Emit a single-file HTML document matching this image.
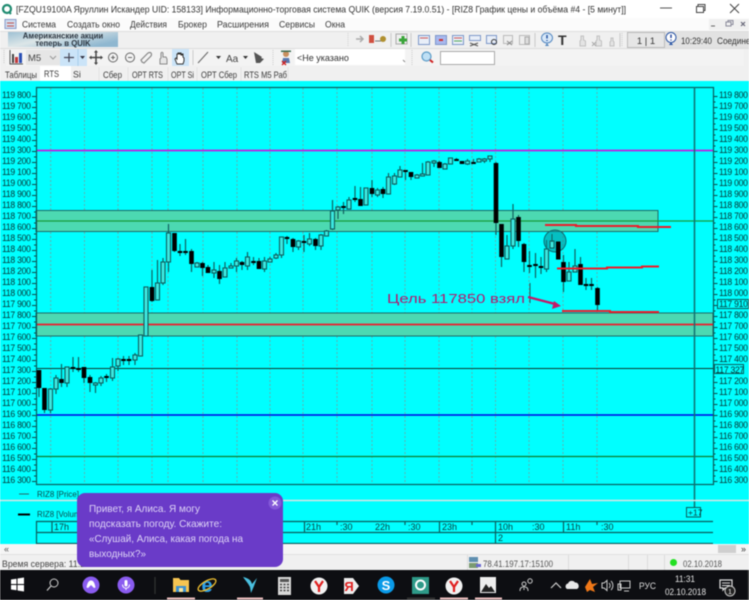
<!DOCTYPE html>
<html lang="ru"><head><meta charset="utf-8"><title>QUIK</title>
<style>
html,body{margin:0;padding:0;background:#fff;width:749px;height:600px;overflow:hidden}
#w{position:relative;width:749px;height:600px;overflow:hidden;filter:blur(.5px);font-family:"Liberation Sans","Noto Sans CJK SC",sans-serif}
svg{position:absolute;left:0;top:0}
.ax{position:absolute;font-size:9.6px;line-height:11px;letter-spacing:-.3px;color:#063232;white-space:nowrap;transform:scaleX(.9);transform-origin:0 0}
</style></head><body><div id="w">
<svg id="s" width="749" height="600" viewBox="0 0 749 600" font-family="Liberation Sans, sans-serif">
<rect width="749" height="600" fill="#f0f0f0"/>
<rect width="749" height="18" fill="#fff"/>
<rect y="18" width="749" height="13" fill="#fbfbfb"/>
<rect y="81" width="749" height="463" fill="#00ffff"/>
<circle cx="7" cy="9" r="4" fill="none" stroke="#1f8a70" stroke-width="2.2"/>
<path d="M9 12l2 2" stroke="#1f8a70" stroke-width="2"/>
<text x="16" y="12.5" font-size="9.6" fill="#333" textLength="610" lengthAdjust="spacingAndGlyphs">[FZQU19100A Яруллин Искандер UID: 158133] Информационно-торговая система QUIK (версия 7.19.0.51) - [RIZ8 График цены и объёма #4 - [5 минут]]</text>
<path d="M660 8h12" stroke="#555"/><rect x="696.500" y="6.500" width="7" height="6" fill="none" stroke="#444"/><path d="M698 6V4.500h7v6h-1.500" fill="none" stroke="#444"/><path d="M730 4l9 9M739 4l-9 9" stroke="#444"/>
<rect x="5" y="19.500" width="11" height="9" fill="#cfdcef" stroke="#8a9bc9"/><path d="M7 23h7M7 26h7" stroke="#c0504d"/>
<g font-size="8.8" fill="#3a3a3a">
<text x="22" y="27.500" textLength="34" lengthAdjust="spacingAndGlyphs">Система</text>
<text x="67" y="27.500" textLength="53" lengthAdjust="spacingAndGlyphs">Создать окно</text>
<text x="130" y="27.500" textLength="37" lengthAdjust="spacingAndGlyphs">Действия</text>
<text x="178" y="27.500" textLength="29" lengthAdjust="spacingAndGlyphs">Брокер</text>
<text x="217" y="27.500" textLength="52" lengthAdjust="spacingAndGlyphs">Расширения</text>
<text x="279" y="27.500" textLength="36" lengthAdjust="spacingAndGlyphs">Сервисы</text>
<text x="325" y="27.500" textLength="20" lengthAdjust="spacingAndGlyphs">Окна</text>
</g>
<rect x="709" y="19" width="40" height="11" fill="#f0f0f0"/>
<path d="M711 26h4" stroke="#666"/><rect x="726" y="22" width="5" height="4" fill="none" stroke="#8a8a9a"/><path d="M728 22v-1.500h5v4h-2" fill="none" stroke="#8a8a9a"/><path d="M741 22l4 4M745 22l-4 4" stroke="#667" stroke-width="1.200"/>
<!-- banner row -->
<defs><linearGradient id="bn" x1="0" y1="0" x2="1" y2="0.6"><stop offset="0" stop-color="#9dc0d3"/><stop offset=".45" stop-color="#dce6e8"/><stop offset="1" stop-color="#8fb7d0"/></linearGradient></defs>
<rect x="8" y="32" width="110" height="15" fill="url(#bn)"/>
<g font-size="7.800" font-weight="bold" fill="#2d3742" text-anchor="middle"><text x="63" y="38.500">Американские акции</text><text x="63" y="46">теперь в QUIK</text></g>
<path d="M0 31.500H749" stroke="#ddd"/><path d="M0 48.500H749" stroke="#dcdcdc"/>
<path d="M348 33v14" stroke="#d0d0d0" stroke-dasharray="1 1"/>
<path d="M356 39h7m-3-3l3 3-3 3" stroke="#aaa" stroke-width="1.500" fill="none"/>
<rect x="369" y="35" width="5" height="8" fill="#d05040"/><circle cx="383" cy="39" r="3" fill="#b09030"/><path d="M375 41h6" stroke="#777"/>
<path d="M391 33v14M411 33v14M535 33v14M620 33v14" stroke="#c8c8c8"/>
<rect x="396" y="34" width="11" height="10" fill="#eee" stroke="#aaa"/><path d="M403 36v8M399 40h8" stroke="#3aa53a" stroke-width="3"/>
<g fill="#e8eef8" stroke="#7d97c9"><rect x="418.500" y="35.500" width="11" height="9"/><rect x="435.500" y="35.500" width="11" height="9" fill="#a8b8ee"/><rect x="452.500" y="35.500" width="11" height="9"/><rect x="469.500" y="35.500" width="11" height="5"/><rect x="486.500" y="35.500" width="10" height="8"/></g>
<path d="M420 38h8M454 38h8" stroke="#c55"/><path d="M454 41h8" stroke="#5a5"/><path d="M439 40h4" stroke="#c33" stroke-width="2"/><path d="M470 43l8 3M478 43l-8 3" stroke="#555"/>
<circle cx="494" cy="42" r="2.500" fill="none" stroke="#333"/>
<rect x="503.500" y="35.500" width="9" height="8" fill="#eee" stroke="#bbb"/><path d="M507 41l5 4M512 41l-5 4" stroke="#888"/>
<rect x="519.500" y="35.500" width="10" height="9" fill="#eee" stroke="#bbb"/><rect x="525" y="37" width="4" height="7" fill="#ddd" stroke="#aaa"/>
<ellipse cx="547" cy="38" rx="5.500" ry="5" fill="#d8e8f8" stroke="#5588c0"/><path d="M547 35v3.500M547 40v1" stroke="#2050a0" stroke-width="1.500"/><path d="M547 43l-2 3h4z" fill="#5588c0"/>
<text x="558" y="45" font-size="14" font-weight="bold" fill="#333">T</text>
<g fill="#e4e4e4" stroke="#c0c0c0"><path d="M580 46v-5l1-1v-4h2.500v4l2 1v5z"/><path d="M596 46v-5l1-1v-4h2.500v4l2 1v5z"/><path d="M610 46v-4l1-1v-3h2v3l1 1v4z"/></g><path d="M592 42l4 4M596 42l-4 4" stroke="#aaa"/>
<path d="M622 33v14" stroke="#ccc" stroke-dasharray="1 1"/>
<rect x="627.500" y="32.500" width="37" height="15" fill="#e6e6e6" stroke="#bbb"/>
<text x="646" y="44" font-size="9.500" fill="#333" text-anchor="middle">1 | 1</text>
<rect x="665" y="32" width="84" height="16" fill="#e2e2e2"/>
<ellipse cx="671" cy="37.500" rx="5" ry="5" fill="#fff" stroke="#2a55a5"/><path d="M671 34.500v3.500M671 39.500v1" stroke="#1a3f9a" stroke-width="1.400"/><path d="M671 42l-2 3h4z" fill="#2a55a5"/>
<text x="681" y="44" font-size="9" fill="#333" textLength="31" lengthAdjust="spacingAndGlyphs">10:29:40</text>
<text x="717" y="44" font-size="9" fill="#333" textLength="38" lengthAdjust="spacingAndGlyphs">Соединен</text>
<!-- toolbar 2 -->
<rect x="6" y="49" width="738" height="17" fill="#f3f3f3"/>
<path d="M4 50v14" stroke="#ccc" stroke-dasharray="1 1"/>
<path d="M10 50v14h13" fill="none" stroke="#555"/><rect x="12" y="54" width="2" height="9" fill="#444"/><rect x="15" y="57" width="3" height="6" fill="#c0383a"/><rect x="19" y="53" width="3" height="10" fill="#2a4fb5"/>
<rect x="26" y="50" width="34" height="15" fill="#e6e6e6"/><text x="28" y="61" font-size="9.500" fill="#444">M5</text><path d="M50 56l3 3 3-3" fill="none" stroke="#999"/>
<rect x="60" y="49" width="27" height="17" fill="#cbe4f8"/><path d="M78 49v17" stroke="#a8cdea"/><path d="M69 53v9M64 57.500h10" stroke="#445" stroke-width="1.200"/><path d="M80 56h5l-2.500 3z" fill="#334"/>
<path d="M96 52v11M91 57.500h11" stroke="#444" stroke-width="1.500"/><path d="M96 50l-2 2.500h4zM96 65l-2-2.500h4zM89 57.500l2.500-2v4zM103 57.500l-2.500-2v4z" fill="#444"/>
<circle cx="113" cy="57.500" r="4.500" fill="none" stroke="#666"/><path d="M111 57.500h4M113 55.500v4" stroke="#666"/>
<circle cx="130" cy="57.500" r="4.500" fill="none" stroke="#666"/><path d="M128 57.500h4" stroke="#666"/>
<path d="M142 62l-1-2 7-7q2-1 3 0t0 3l-7 7z" fill="none" stroke="#888" stroke-width="1.200"/>
<path d="M160 64v-5l1-1v-5q1-1.500 2 0v4h3l1 2v5z" fill="#e6e6e6" stroke="#888"/>
<rect x="172" y="49" width="17" height="17" fill="#cbe4f8"/><path d="M177 64l-2-5 1-1 1 1v-5h1v-1h1v1h1v-1h1v2h1v-1h1v3l1 1v3l-1 3z" fill="#fff" stroke="#333"/>
<path d="M193 50v15" stroke="#ccc"/><path d="M198 63l10-11" stroke="#666"/><path d="M216 56h5l-2.500 3z" fill="#333"/>
<text x="226" y="62" font-size="10" fill="#444">Aa</text><path d="M243 56h5l-2.500 3z" fill="#333"/>
<path d="M254 52l8 5-1 1 3 1-4 4h-4z" fill="#555"/>
<path d="M273 50v15" stroke="#ccc" stroke-dasharray="1 1"/>
<circle cx="286" cy="54" r="3" fill="#c89060"/><path d="M281 52h10v-1.500h-10z" fill="#3a6a50"/><path d="M282 63l1-5h6l1 5z" fill="#5878b0"/><path d="M282 61l4 4M286 61l-4 4" stroke="#d02020" stroke-width="1.300"/>
<rect x="295" y="49" width="110" height="16" fill="#fff"/><text x="297" y="61" font-size="9" fill="#333">&lt;Не указано</text><path d="M403 60l2 2" stroke="#888"/>
<path d="M412 50v15" stroke="#ccc" stroke-dasharray="1 1"/>
<circle cx="426.500" cy="56.500" r="4.500" fill="#bfe0f5" stroke="#5a9bc7" stroke-width="1.200"/><path d="M430 60l3 2.500" stroke="#d02020" stroke-width="2"/>
<rect x="440.500" y="51.500" width="54" height="13" fill="#fff" stroke="#aaa"/>
<!-- tabs -->
<rect x="40" y="66" width="31" height="15" fill="#fff"/>
<g font-size="8.800" fill="#3a3a3a">
<text x="5" y="78" textLength="32" lengthAdjust="spacingAndGlyphs">Таблицы</text>
<text x="44" y="77" textLength="15" lengthAdjust="spacingAndGlyphs">RTS</text>
<text x="73" y="77.500">Si</text>
<text x="103" y="78" textLength="19" lengthAdjust="spacingAndGlyphs">Сбер</text>
<text x="132" y="78" textLength="31" lengthAdjust="spacingAndGlyphs">OPT RTS</text>
<text x="171" y="78" textLength="23" lengthAdjust="spacingAndGlyphs">OPT Si</text>
<text x="201" y="78" textLength="36" lengthAdjust="spacingAndGlyphs">OPT Сбер</text>
<text x="244" y="78" textLength="43" lengthAdjust="spacingAndGlyphs">RTS M5 Раб</text>
</g>
<path d="M99 67v14M128 67v14M168 67v14M197 67v14M241 67v14M288 67v14" stroke="#e4e4e4"/>
<!-- chart -->
<g id="grid" stroke="#7a9a9a" stroke-dasharray="2 2" fill="none" opacity=".8"></g>
<rect x="36" y="210.500" width="622" height="21" fill="#4cd9b2" stroke="#1e6a68"/>
<rect x="36" y="313" width="677" height="23" fill="#4cd9b2" stroke="#1e6a68"/>
<path d="M36 150.500H713" stroke="#c01ee0" stroke-width="1.700"/>
<path d="M36 221H713" stroke="#189a3a" stroke-width="1.300"/>
<path d="M36 368.500H713" stroke="#0e3a30" stroke-width="1.100"/>
<path d="M36 415H713" stroke="#0000e8" stroke-width="1.600"/>
<path d="M36 456.500H713" stroke="#0c7c2c" stroke-width="1.300"/>
<path d="M36 324.500H713" stroke="#ee1c2a" stroke-width="1.700"/>
<g id="ticks" stroke="#0c4a4a" fill="none"></g>
<rect x="36.500" y="87.500" width="677" height="397" fill="none" stroke="#0a5c5c" stroke-width="1.200"/>
<path d="M694.500 87V507" stroke="#0f7272" stroke-width="1.500"/>
<g id="cw" stroke="#12605f" stroke-width="1.200" fill="none"></g>
<g id="cb" fill="#000"></g>
<g id="ch" fill="#3ce8e0" stroke="#0e5e5e" stroke-width="1.100"></g>
<path d="M530 283v20" stroke="#12605f"/>
<circle cx="555" cy="241" r="11" fill="#0a8a90" fill-opacity=".55" stroke="#0d6a70"/>
<rect x="550" y="241" width="4" height="7" fill="#3ce8e0" stroke="#0e5e5e" stroke-width="1"/>
<path d="M552 234v8" stroke="#12605f"/>
<rect x="556" y="241.500" width="4.500" height="18"/>
<path d="M545 225h31v1h62v1h33M557 268.500h50v-1h35v-1h17M562 311h48v1h49" fill="none" stroke="#ee1c2a" stroke-width="2"/>
<text x="387" y="303" font-size="13.300" fill="#b3186e" textLength="138" lengthAdjust="spacingAndGlyphs">Цель 117850 взял</text>
<path d="M528 297l27 7" stroke="#c21a68" stroke-width="2.400"/><path d="M561 306l-9 3 2-8z" fill="#c21a68"/>
<rect x="717.500" y="299.500" width="31" height="9" fill="#00ffff" stroke="#0a5c5c"/>
<rect x="714.500" y="364.500" width="29" height="9" fill="#00ffff" stroke="#0a5c5c"/>
<!-- bottom panels -->
<path d="M0 500.500H749" stroke="#d8e4e4" stroke-width="1.600"/>
<path d="M19 494h10" stroke="#2a6a6a"/><path d="M18 514.500h12" stroke="#000" stroke-width="2"/>
<g font-size="8.500" fill="#0c4a4a">
<text x="37" y="497" textLength="42" lengthAdjust="spacingAndGlyphs">RIZ8 [Price]</text>
<text x="37" y="517" textLength="50" lengthAdjust="spacingAndGlyphs">RIZ8 [Volume]</text>
</g>
<rect x="686.500" y="507.500" width="14" height="9.500" fill="#00ffff" stroke="#0a5c5c"/>
<text x="688" y="515.500" font-size="8.500" fill="#0a3c3c">+17</text>
<path d="M36 521.500H713M36 532.500H713M36 543.500H713M36.500 521V544M52 521V532M304.500 521V532M439.500 521V532M495.500 521V544M563.500 521V532M337 521v4M405 521v4M472 521v4M597 521v4" stroke="#0a5c5c" stroke-width="1.200" fill="none"/>
<g font-size="9" fill="#0a3c3c">
<text x="54" y="530">17h</text><text x="306" y="530">21h</text><text x="340" y="530">:30</text><text x="375" y="530">22h</text><text x="408" y="530">:30</text><text x="442" y="530">23h</text><text x="498" y="530">10h</text><text x="532" y="530">:30</text><text x="566" y="530">11h</text><text x="601" y="530">:30</text><text x="498" y="541">2</text>
</g>
<!-- scroll / status -->
<rect y="544" width="749" height="10" fill="#f5f5f5"/>
<text x="4" y="552" font-size="9" fill="#555">«</text><text x="741" y="552" font-size="9" fill="#333">»</text>
<rect x="718" y="545" width="18" height="8" fill="#cfcfcf"/>
<path d="M0 554.500H749" stroke="#e2e2e2"/>
<rect y="555" width="749" height="15" fill="#f0f0f0"/>
<text x="2" y="567" font-size="9" fill="#444" textLength="100" lengthAdjust="spacingAndGlyphs">Время сервера: 11:29:40</text>
<path d="M467.500 555v15M568.500 555v15M628.500 555v15M647.500 555v15M664.500 555v15" stroke="#dcdcdc"/>
<rect x="469" y="557" width="9" height="5" fill="#5f8fb0"/><rect x="469" y="563" width="9" height="5" fill="#7a9a70"/><rect x="476" y="564" width="5" height="3" fill="#6a6ad0"/>
<text x="483" y="567" font-size="9.200" fill="#555" textLength="70" lengthAdjust="spacingAndGlyphs">78.41.197.17:15100</text>
<circle cx="673.500" cy="562.500" r="3.500" fill="#22e022"/>
<text x="683" y="567" font-size="9.200" fill="#555" textLength="39" lengthAdjust="spacingAndGlyphs">02.10.2018</text>
<!-- taskbar -->
<rect y="570" width="749" height="30" fill="#0d0e12"/>
<path d="M11 579.500l5.500-.8v5.300h-5.500zM17.500 578.500l6.500-1v6.500h-6.500zM11 585h5.500v5.300l-5.500-.8zM17.500 585h6.500v6.500l-6.500-1z" fill="#fff"/>
<circle cx="54" cy="583" r="4" fill="none" stroke="#ccc"/><path d="M51 586l-4 4.500" stroke="#ccc" stroke-width="1.200"/>
<circle cx="91" cy="585" r="8.500" fill="#8a5cf0"/><path d="M91 580.500c-3 0-4 4-4.500 7l1.500.5 3-3 3 3 1.500-.5c-.5-3-1.500-7-4.500-7z" fill="#fff"/>
<circle cx="126" cy="585" r="8.500" fill="#8a5cf0"/><rect x="124.500" y="580" width="3" height="6.500" rx="1.500" fill="#fff"/><path d="M122.500 584.500c0 5 7 5 7 0M126 588v2" fill="none" stroke="#fff"/>
<path d="M155 577v17" stroke="#333" stroke-width="1.200"/>
<path d="M173 578h6l1.500 2H189v12h-16z" fill="#f5c452"/><rect x="176" y="586" width="10" height="6" fill="#3a8fd0"/><rect x="179" y="588" width="4" height="4" fill="#f5e5a0"/>
<text x="207" y="592" font-size="20" font-weight="bold" fill="#2ea0e8" text-anchor="middle">e</text><ellipse cx="207" cy="585" rx="10" ry="4" fill="none" stroke="#f0c030" stroke-width="1.300" transform="rotate(-30 207 585)"/>
<path d="M243 577c5 1 8 3 9 7l5-6-3 8-3 7-1-6c-2-4-5-7-7-10z" fill="#4ac0e0"/>
<rect x="278" y="577" width="13" height="18" fill="#d8d8d8"/><rect x="280" y="579" width="9" height="3" fill="#555"/><path d="M280 584.500h9M280 587.500h9M280 590.500h9" stroke="#444" stroke-width="1.500" stroke-dasharray="2 1.500"/>
<circle cx="319" cy="586" r="8.500" fill="#f2f2f2"/><path d="M315 581l4 6v5M323 581l-4 6" fill="none" stroke="#e02020" stroke-width="2.200"/>
<path d="M344 578h9l6 8-6 8h-9z" fill="#eee"/><text x="349" y="591" font-size="13" font-weight="bold" fill="#e02020" text-anchor="middle">Я</text>
<circle cx="386" cy="585" r="8.500" fill="#0a9ae8"/><text x="386" y="590" font-size="13" font-weight="bold" fill="#fff" text-anchor="middle">S</text>
<rect x="412" y="577" width="17" height="17" fill="#2e9a88"/><circle cx="420.500" cy="585" r="4.500" fill="none" stroke="#fff" stroke-width="2"/>
<circle cx="454" cy="586" r="8.500" fill="#f2f2f2"/><path d="M450 581l4 6v5M458 581l-4 6" fill="none" stroke="#e02020" stroke-width="2.200"/>
<rect x="480" y="577" width="16" height="16" fill="#eee"/><path d="M481 592l5-8 3 4 2-2 4 6z" fill="#222"/>
<circle cx="530" cy="581" r="2.200" fill="none" stroke="#ccc"/><circle cx="524" cy="584" r="2" fill="none" stroke="#ccc"/><path d="M524 590v-2M520 591c0-3 1-4 4-4s4 1 4 4" fill="none" stroke="#ccc"/>
<path d="M551 588l5-5 5 5" fill="none" stroke="#ccc" stroke-width="1.200"/>
<path d="M567 589a3 3 0 0 1 1-5.500 4 4 0 0 1 7-1 3.500 3.500 0 0 1 2 6.500z" fill="#e8e8e8"/>
<path d="M585 587l5-8 2 5 6-1-5 4 2 5-5-2-3 2z" fill="#f07818"/>
<path d="M602 583h2l3-2.500v10l-3-2.500h-2zM609 583c1.500 1.500 1.500 3.500 0 5M611 581c2.500 2.500 2.500 6.500 0 9" fill="none" stroke="#ccc"/>
<rect x="620" y="581" width="10" height="7" fill="none" stroke="#ccc"/><path d="M618 584h3v6h-3zM624 591h5" fill="none" stroke="#ccc"/>
<text x="639" y="589" font-size="9" fill="#ddd" textLength="17" lengthAdjust="spacingAndGlyphs">РУС</text>
<text x="675" y="582" font-size="9" fill="#e4e4e4" textLength="20" lengthAdjust="spacingAndGlyphs">11:31</text>
<text x="665" y="595" font-size="9" fill="#e4e4e4" textLength="41" lengthAdjust="spacingAndGlyphs">02.10.2018</text>
<path d="M720 580h12v8h-7l-2 2v-2h-3z" fill="none" stroke="#e0e0e0" stroke-width="1.200"/><path d="M722 583h8M722 585.500h8" stroke="#e0e0e0"/>
<circle cx="730" cy="591" r="5" fill="#222" stroke="#ccc"/><text x="730" y="594" font-size="7.500" fill="#eee" text-anchor="middle">1</text>
<path d="M748 570v30" stroke="#333"/>
<path d="M167 598.500h28M237 598.500h26M440 598.500h28M475 598.500h27" stroke="#eec0c0" stroke-width="2"/><path d="M407 598.500h28" stroke="#333" stroke-width="2"/>
<!-- Alice bubble -->
<rect x="77" y="493" width="206" height="74" rx="8" fill="#6a3bc8"/>
<circle cx="275" cy="503" r="6.500" fill="#8358d8"/><path d="M272.500 500.500l5 5M277.500 500.500l-5 5" stroke="#fff" stroke-width="1.300"/>
<g font-size="10.400" fill="#ded4f6">
<text x="89" y="512" textLength="111" lengthAdjust="spacingAndGlyphs">Привет, я Алиса. Я могу</text>
<text x="89" y="527" textLength="133" lengthAdjust="spacingAndGlyphs">подсказать погоду. Скажите:</text>
<text x="89" y="542" textLength="154" lengthAdjust="spacingAndGlyphs">«Слушай, Алиса, какая погода на</text>
<text x="89" y="557" textLength="57" lengthAdjust="spacingAndGlyphs">выходных?»</text>
</g>
</svg>
<div class="ax" style="left:2px;top:90px">119 800<br>119 700<br>119 600<br>119 500<br>119 400<br>119 300<br>119 200<br>119 100<br>119 000<br>118 900<br>118 800<br>118 700<br>118 600<br>118 500<br>118 400<br>118 300<br>118 200<br>118 100<br>118 000<br>117 900<br>117 800<br>117 700<br>117 600<br>117 500<br>117 400<br>117 300<br>117 200<br>117 100<br>117 000<br>116 900<br>116 800<br>116 700<br>116 600<br>116 500<br>116 400<br>116 300</div>
<div class="ax" style="left:719px;top:90px">119 800<br>119 700<br>119 600<br>119 500<br>119 400<br>119 300<br>119 200<br>119 100<br>119 000<br>118 900<br>118 800<br>118 700<br>118 600<br>118 500<br>118 400<br>118 300<br>118 200<br>118 100<br>118 000<br>117 910<br>117 800<br>117 700<br>117 600<br>117 500<br>117 400<br><span style="position:relative;left:-4px">117 327</span><br>117 200<br>117 100<br>117 000<br>116 900<br>116 800<br>116 700<br>116 600<br>116 500<br>116 400<br>116 300</div>
</div>
<script>
(function(){
var N='http://www.w3.org/2000/svg';
function el(p,t,a){var e=document.createElementNS(N,t);for(var k in a)e.setAttribute(k,a[k]);document.getElementById(p).appendChild(e);}
[50.7,84.5,118,152,168,203,237,270,303,337,372,405,439,472,495.5,529,563,597].forEach(function(x){
el('grid','path',{d:'M'+x+' 88V484'});});
var t='';
for(var i=0;i<=70;i++){var y=96+i*5.5+.5,l=i%2==0?4:2;
t+='M'+(36-l)+' '+y+'H36M713.500 '+y+'h'+l+' ';}
el('ticks','path',{d:t});
var c="B370,370,388,397;B388,388,410,413;H388,389,410,413;H375,378,389,394;B364,379,383,387;H367,367,383,387;B357,367,369,372;B357,368,369,372;B367,367,378,383;B375,377,383,392;H382,383,385,393;H376,378,383,386;B374,376,377,382;H358,367,378,381;H358,359,366,371;B356,359,360,365;B356,359,360,365;H353,355,360,365;H335,335,356,356;H287,287,336,336;B270,287,301,302;H260,283,300,300;H258,262,283,285;H224,233,262,272;B233,233,251,252;B244,251,251,256;B239,251,252,255;B249,251,264,272;H262,263,267,267;B262,263,268,276;B265,267,273,273;H262,270,273,278;B265,271,279,284;H262,268,277,277;H263,266,268,268;H258,261,266,272;B261,262,265,270;H252,257,266,270;B257,261,262,265;B258,261,269,269;H257,261,269,272;H257,259,262,262;H253,255,258,259;H237,237,255,258;B236,237,238,244;B238,239,247,252;H240,241,247,250;B235,241,243,252;H233,239,244,246;B238,239,246,250;H234,235,246,250;H230,231,236,236;H200,211,229,230;H206,207,210,219;B202,206,207,214;H197,200,209,209;B186,198,199,202;B187,199,206,206;H188,188,205,205;B180,188,194,197;H188,190,195,197;B187,189,194,198;H173,177,194,194;H173,176,184,185;H166,170,177,177;B170,170,171,180;B172,172,177,180;H174,175,178,178;H163,174,175,175;H161,162,175,175;H160,161,162,167;B161,162,168,168;H163,164,169,169;H158,158,164,164;B158,159,161,161;B161,161,164,164;H159,161,164,165;B159,162,163,164;H158,159,162,162;H158,159,160,163;H156,156,159,162;B162,163,223,235;B224,224,257,267;H235,246,259,259;H204,219,246,249;B215,217,241,247;B243,244,262,272;B251,265,266,273;B253,264,266,278;B257,266,267,274;H240,249,269,272;H230,242,248,248;B241,242,260,260;B255,262,282,292;H262,272,281,281;H249,266,272,272;B257,264,285,285;B278,284,285,290;B278,284,285,290;B287,288,305,310".split(';');
c.forEach(function(s,i){
var k=s[0],v=s.slice(1).split(',').map(Number),x=Math.round((39+5.64*i)*2)/2;
if(i==91||i==92)return;
el('cw','path',{d:'M'+x+' '+v[0]+'V'+v[3]});
var h=Math.max(v[2]-v[1],2);
if(k=='B')el('cb','rect',{x:x-2.3,y:v[1],width:4.6,height:h});
else el('ch','rect',{x:x-2,y:v[1],width:4,height:h});
});
})();
</script>
</body></html>
